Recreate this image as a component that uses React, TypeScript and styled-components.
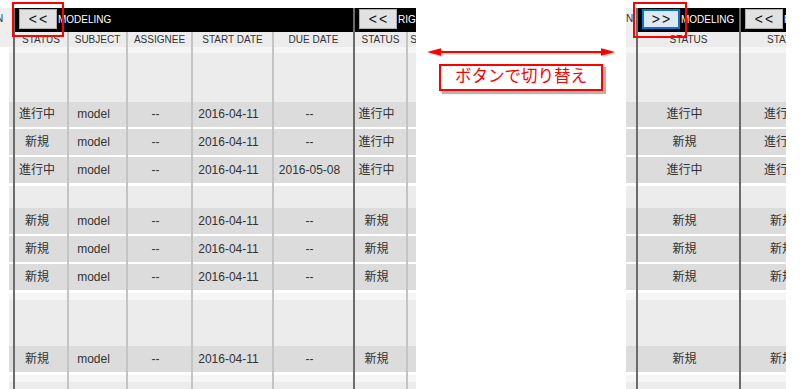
import React from 'react';
import styled, { createGlobalStyle } from 'styled-components';

const GlobalStyle = createGlobalStyle`
  html, body { margin: 0; padding: 0; background: #ffffff; }
  body { font-family: "Liberation Sans", Arial, "Noto Sans CJK JP", sans-serif; }
  #root { width: 800px; height: 389px; overflow: hidden; }
`;

type BandKind = 'lighter' | 'light' | 'gap' | 'data';
type Band = { kind: BandKind; h: number; row?: number };

const bands: Band[] = [
  { kind: 'lighter', h: 6 },
  { kind: 'light', h: 49 },
  { kind: 'data', h: 25, row: 0 },
  { kind: 'gap', h: 2 },
  { kind: 'data', h: 26, row: 1 },
  { kind: 'gap', h: 2 },
  { kind: 'data', h: 26, row: 2 },
  { kind: 'gap', h: 3 },
  { kind: 'light', h: 22 },
  { kind: 'data', h: 26, row: 3 },
  { kind: 'gap', h: 2 },
  { kind: 'data', h: 26, row: 4 },
  { kind: 'gap', h: 2 },
  { kind: 'data', h: 26, row: 5 },
  { kind: 'gap', h: 3 },
  { kind: 'lighter', h: 7 },
  { kind: 'light', h: 46 },
  { kind: 'data', h: 26, row: 6 },
  { kind: 'gap', h: 3 },
  { kind: 'lighter', h: 7 },
  { kind: 'light', h: 20 },
];

type Row = Record<string, string>;
const rows: Row[] = [
  { status: '進行中', subject: 'model', assignee: '--', start: '2016-04-11', due: '--', status2: '進行中' },
  { status: '新規', subject: 'model', assignee: '--', start: '2016-04-11', due: '--', status2: '進行中' },
  { status: '進行中', subject: 'model', assignee: '--', start: '2016-04-11', due: '2016-05-08', status2: '進行中' },
  { status: '新規', subject: 'model', assignee: '--', start: '2016-04-11', due: '--', status2: '新規' },
  { status: '新規', subject: 'model', assignee: '--', start: '2016-04-11', due: '--', status2: '新規' },
  { status: '新規', subject: 'model', assignee: '--', start: '2016-04-11', due: '--', status2: '新規' },
  { status: '新規', subject: 'model', assignee: '--', start: '2016-04-11', due: '--', status2: '新規' },
];

type Col = { key: string; label: string; width: number; line?: boolean };
type GroupDef = { title: string; button: string; focused?: boolean; cols: Col[] };

const leftGroups: GroupDef[] = [
  {
    title: 'MODELING',
    button: '<<',
    cols: [
      { key: 'status', label: 'STATUS', width: 52, line: true },
      { key: 'subject', label: 'SUBJECT', width: 57, line: true },
      { key: 'assignee', label: 'ASSIGNEE', width: 63, line: true },
      { key: 'start', label: 'START DATE', width: 79, line: true },
      { key: 'due', label: 'DUE DATE', width: 79 },
    ],
  },
  {
    title: 'RIGGING',
    button: '<<',
    cols: [
      { key: 'status2', label: 'STATUS', width: 51, line: true },
      { key: 'none', label: 'SUBJECT', width: 50, line: true },
    ],
  },
];

const rightGroups: GroupDef[] = [
  {
    title: 'MODELING',
    button: '>>',
    focused: true,
    cols: [{ key: 'status', label: 'STATUS', width: 101 }],
  },
  {
    title: 'RIGGING',
    button: '<<',
    cols: [{ key: 'status2', label: 'STATUS', width: 90 }],
  },
];

const bandColor: Record<BandKind, string> = {
  lighter: '#f5f5f5',
  light: '#ececec',
  gap: '#ffffff',
  data: '#dcdcdc',
};

const Page = styled.div`
  display: flex;
  align-items: flex-start;
  width: 800px;
  height: 389px;
  overflow: hidden;
  background: #ffffff;
`;

const Panel = styled.div<{ $w: number }>`
  position: relative;
  display: flex;
  flex-direction: column;
  width: ${(p) => p.$w}px;
  height: 389px;
  flex-shrink: 0;
  overflow: hidden;
`;

const TopStrip = styled.div`
  height: 8px;
  flex-shrink: 0;
  background: #ffffff;
`;

const PanelBody = styled.div`
  display: flex;
  align-items: flex-start;
`;

const Gutter = styled.div<{ $w: number }>`
  display: flex;
  flex-direction: column;
  width: ${(p) => p.$w}px;
  flex-shrink: 0;
  overflow: hidden;
`;

const GutterHead = styled.div<{ $inset: number }>`
  height: 39px;
  margin-left: ${(p) => p.$inset}px;
  padding-top: 5px;
  box-sizing: border-box;
  background: #eeeeee;
  overflow: hidden;
  white-space: nowrap;
  font-size: 10px;
  line-height: 12px;
  color: #333333;
`;

const GutterLabel = styled.span<{ $shift: number }>`
  display: inline-block;
  margin-left: ${(p) => p.$shift}px;
`;

const GutterBand = styled.div<{ $kind: BandKind; $h: number; $inset: number }>`
  height: ${(p) => p.$h}px;
  margin-left: ${(p) => p.$inset}px;
  background: ${(p) => bandColor[p.$kind]};
`;

const Group = styled.div`
  display: flex;
  flex-direction: column;
  flex-shrink: 0;
  border-left: 2px solid #6b6b6b;
`;

const GroupBar = styled.div`
  display: flex;
  align-items: flex-start;
  height: 24px;
  padding: 1px 0 0 4px;
  box-sizing: border-box;
  background: #000000;
  overflow: hidden;
  white-space: nowrap;
`;

const NavButton = styled.button<{ $focused?: boolean }>`
  width: 38px;
  height: 20px;
  flex-shrink: 0;
  padding: 0;
  margin: 0;
  box-sizing: border-box;
  border: 1px solid ${(p) => (p.$focused ? '#0078d7' : '#adadad')};
  box-shadow: ${(p) => (p.$focused ? 'inset 0 0 0 1px #0078d7' : 'none')};
  background: ${(p) => (p.$focused ? '#dfe9f3' : '#e1e1e1')};
  color: #111111;
  font-family: "Liberation Sans", Arial, sans-serif;
  font-size: 14px;
  letter-spacing: 2px;
  text-indent: 2px;
  line-height: 17px;
  cursor: pointer;
`;

const GroupTitle = styled.span`
  margin-left: 1px;
  padding-top: 5px;
  color: #ffffff;
  font-size: 10px;
  line-height: 12px;
`;

const Columns = styled.div`
  display: flex;
`;

const Column = styled.div<{ $w: number; $line?: boolean }>`
  display: flex;
  flex-direction: column;
  flex-shrink: 0;
  width: ${(p) => p.$w}px;
  border-right: ${(p) => (p.$line ? '2px solid #c4c4c4' : 'none')};
`;

const HeadCell = styled.div`
  height: 15px;
  background: #ececec;
  color: #333333;
  font-size: 10px;
  line-height: 15px;
  text-align: center;
  white-space: nowrap;
  overflow: hidden;
`;

const Cell = styled.div<{ $kind: BandKind; $h: number }>`
  height: ${(p) => p.$h}px;
  background: ${(p) => bandColor[p.$kind]};
  color: #333333;
  font-size: 12px;
  line-height: ${(p) => p.$h}px;
  text-align: center;
  padding-right: 8px;
  white-space: nowrap;
  overflow: hidden;
`;

const Middle = styled.div`
  display: flex;
  flex-direction: column;
  width: 208px;
  flex-shrink: 0;
  padding-top: 45px;
`;

const ArrowSvg = styled.svg`
  display: block;
  margin-left: 8px;
`;

const NoteBox = styled.div`
  margin: 5px 0 0 23px;
  width: 164px;
  height: 27px;
  box-sizing: border-box;
  border: 2px solid #ff0000;
  background: #ffffff;
  box-shadow: 3px 3px 1px #b4b4b4;
  color: #ff0000;
  font-family: "Noto Sans CJK JP", sans-serif;
  font-size: 16.5px;
  line-height: 19px;
  text-align: center;
  white-space: nowrap;
`;

const Highlight = styled.div<{ $x: number; $w: number; $h: number }>`
  position: absolute;
  left: ${(p) => p.$x}px;
  top: 2px;
  width: ${(p) => p.$w}px;
  height: ${(p) => p.$h}px;
  box-sizing: border-box;
  border: 2px solid #ff0000;
  pointer-events: none;
`;

function GroupView({ g }: { g: GroupDef }) {
  return (
    <Group>
      <GroupBar>
        <NavButton $focused={g.focused}>{g.button}</NavButton>
        <GroupTitle>{g.title}</GroupTitle>
      </GroupBar>
      <Columns>
        {g.cols.map((c) => (
          <Column key={c.key + c.label} $w={c.width} $line={c.line}>
            <HeadCell>{c.label}</HeadCell>
            {bands.map((b, i) => (
              <Cell key={i} $kind={b.kind} $h={b.h}>
                {b.kind === 'data' && b.row !== undefined ? rows[b.row][c.key] ?? '' : ''}
              </Cell>
            ))}
          </Column>
        ))}
      </Columns>
    </Group>
  );
}

function GutterView({ width, inset, shift }: { width: number; inset: number; shift: number }) {
  return (
    <Gutter $w={width}>
      <GutterHead $inset={inset === 9 ? 0 : inset}>
        <GutterLabel $shift={shift}>N</GutterLabel>
      </GutterHead>
      {bands.map((b, i) => (
        <GutterBand key={i} $kind={b.kind} $h={b.h} $inset={inset} />
      ))}
    </Gutter>
  );
}

function Arrow() {
  const shape = (
    <>
      <rect x="14" y="6" width="166" height="2" />
      <polygon points="3,7 17,3.2 17,10.8" />
      <polygon points="191,7 177,3.2 177,10.8" />
    </>
  );
  return (
    <ArrowSvg width="196" height="14" viewBox="0 0 196 14">
      <g transform="translate(1.5,1.5)" fill="#c4c4c4" opacity="0.7">
        {shape}
      </g>
      <g fill="#ff0000">{shape}</g>
    </ArrowSvg>
  );
}

export default function App() {
  return (
    <>
      <GlobalStyle />
      <Page>
        <Panel $w={416}>
          <TopStrip />
          <PanelBody>
            <GutterView width={13} inset={9} shift={-4} />
            {leftGroups.map((g) => (
              <GroupView key={g.title} g={g} />
            ))}
          </PanelBody>
          <Highlight $x={12} $w={52} $h={35} />
        </Panel>
        <Middle>
          <Arrow />
          <NoteBox>ボタンで切り替え</NoteBox>
        </Middle>
        <Panel $w={162}>
          <TopStrip />
          <PanelBody>
            <GutterView width={12} inset={2} shift={0} />
            {rightGroups.map((g) => (
              <GroupView key={g.title} g={g} />
            ))}
          </PanelBody>
          <Highlight $x={9} $w={54} $h={36} />
        </Panel>
      </Page>
    </>
  );
}
